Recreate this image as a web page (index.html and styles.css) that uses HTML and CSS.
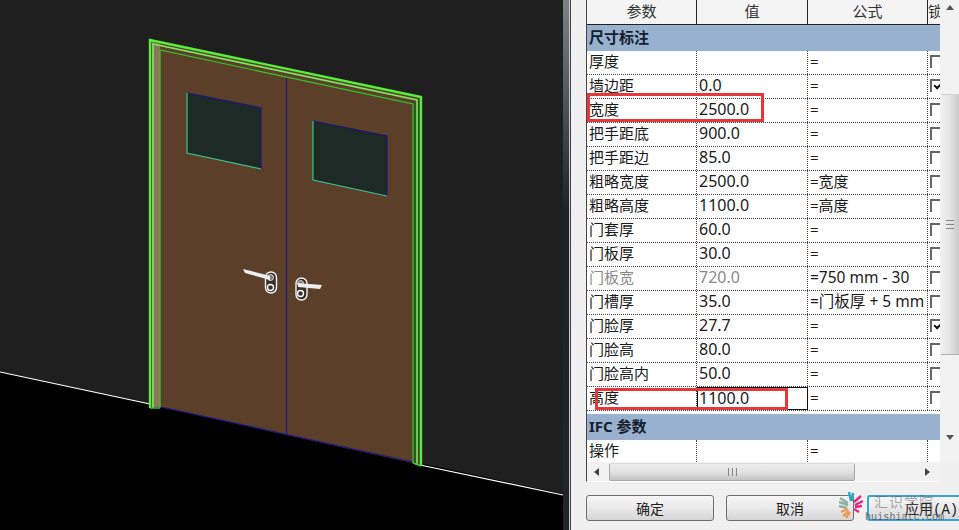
FILE: index.html
```html
<!DOCTYPE html>
<html lang="en">
<head>
    <meta charset="UTF-8">
    <meta name="viewport" content="width=device-width, initial-scale=1.0">
    <title>族类型参数</title>
    <link rel="stylesheet" href="styles.css">
</head>
<body>
    <div class="viewport">
        <svg class="scene" width="563" height="530" viewBox="0 0 563 530">
            <rect width="563" height="530" fill="#1f1f1f"/>
            <polygon points="0,372 563,494 563,530 0,530" fill="#000"/>
            <polyline points="0,372 150,404" fill="none" stroke="#fff" stroke-width="1.2"/>
            <polyline points="420,465 563,495" fill="none" stroke="#fff" stroke-width="1.2"/>

            <!-- door leafs -->
            <polygon points="150,40 421,97 421,466 413,463 161,407 150,408" fill="#5b3f28"/>
            <polygon points="152,42 160,44 160,407 152,407" fill="#8d7458"/>
            <polygon points="413,103 420,100 420,464 413,461" fill="#3b4a2c"/>
            <line x1="161" y1="407" x2="413" y2="462" stroke="#1f1490" stroke-width="1.2"/>
            <line x1="286.5" y1="78" x2="286.5" y2="435" stroke="#1f1490" stroke-width="1.2"/>

            <!-- frame -->
            <polyline points="150,408 150,40 421,97 421,466" fill="none" stroke="#55f03a" stroke-width="2.4"/>
            <polyline points="153,408 153,44 417,100 417,464" fill="none" stroke="#7ae862" stroke-width="1.6"/>
            <polyline points="160,408 160,50 413,104 413,463" fill="none" stroke="#34c92a" stroke-width="1.2"/>
            <line x1="150" y1="408" x2="160" y2="408" stroke="#43c934" stroke-width="1.4"/>
            <line x1="413" y1="463" x2="421" y2="466" stroke="#43c934" stroke-width="1.4"/>

            <!-- windows -->
            <polygon points="187,93 261,108 261,169 187,153" fill="#1d2a26"/>
            <polyline points="187,93 261,108 261,169" fill="none" stroke="#1c1480" stroke-width="1.2"/>
            <polyline points="187,93 187,153 261,169" fill="none" stroke="#3fc08a" stroke-width="1.2"/>
            <polygon points="313,121 387,136 387,196 313,180" fill="#1d2a26"/>
            <polyline points="313,121 387,136 387,196" fill="none" stroke="#1c1480" stroke-width="1.2"/>
            <polyline points="313,121 313,180 387,196" fill="none" stroke="#3fc08a" stroke-width="1.2"/>

            <!-- handles -->
            <rect x="265.5" y="272" width="11" height="21" rx="5.5" fill="#3a2e26" stroke="#f4f4f4" stroke-width="1.4"/>
            <circle cx="270.5" cy="277.5" r="3" fill="#777" stroke="#ddd" stroke-width="1"/>
            <circle cx="270.5" cy="287.5" r="3" fill="#333" stroke="#fff" stroke-width="1.4"/>
            <polygon points="243,269 270,276 270,280 245,273" fill="#eee"/>
            <rect x="296" y="278" width="11" height="22" rx="5.5" fill="#3a2e26" stroke="#f4f4f4" stroke-width="1.4"/>
            <circle cx="300.5" cy="283.5" r="3" fill="#777" stroke="#ddd" stroke-width="1"/>
            <circle cx="300.5" cy="293.5" r="3" fill="#333" stroke="#fff" stroke-width="1.4"/>
            <polygon points="298,283 322,285 320,289 298,287" fill="#eee"/>
        </svg>
    </div>
    <div class="divider"></div>

    <div class="panel">
        <div class="grid">
            <div class="table">
                <div class="row head">
                    <div>参数</div><div>值</div><div>公式</div><div class="lock">锁定</div>
                </div>
                <div class="section first">尺寸标注</div>
                <div class="row"><div>厚度</div><div></div><div>=</div><div><span class="check"></span></div></div>
                <div class="row"><div>墙边距</div><div class="num">0.0</div><div>=</div><div><span class="check on"></span></div></div>
                <div class="row"><div>宽度</div><div class="num">2500.0</div><div>=</div><div><span class="check"></span></div></div>
                <div class="row"><div>把手距底</div><div class="num">900.0</div><div>=</div><div><span class="check"></span></div></div>
                <div class="row"><div>把手距边</div><div class="num">85.0</div><div>=</div><div><span class="check"></span></div></div>
                <div class="row"><div>粗略宽度</div><div class="num">2500.0</div><div>=宽度</div><div><span class="check"></span></div></div>
                <div class="row"><div>粗略高度</div><div class="num">1100.0</div><div>=高度</div><div><span class="check"></span></div></div>
                <div class="row"><div>门套厚</div><div class="num">60.0</div><div>=</div><div><span class="check"></span></div></div>
                <div class="row"><div>门板厚</div><div class="num">30.0</div><div>=</div><div><span class="check"></span></div></div>
                <div class="row"><div class="muted">门板宽</div><div class="num muted">720.0</div><div class="formula">=750 mm - 30</div><div><span class="check"></span></div></div>
                <div class="row"><div>门槽厚</div><div class="num">35.0</div><div class="formula">=门板厚 + 5 mm</div><div><span class="check"></span></div></div>
                <div class="row"><div>门脸厚</div><div class="num">27.7</div><div>=</div><div><span class="check on"></span></div></div>
                <div class="row"><div>门脸高</div><div class="num">80.0</div><div>=</div><div><span class="check"></span></div></div>
                <div class="row"><div>门脸高内</div><div class="num">50.0</div><div>=</div><div><span class="check"></span></div></div>
                <div class="row"><div>高度</div><div class="num editing">1100.0</div><div>=</div><div><span class="check"></span></div></div>
                <div class="section">IFC 参数</div>
                <div class="row last"><div>操作</div><div></div><div>=</div><div></div></div>
            </div>
            <div class="vscroll">
                <span class="arrow up"></span>
                <div class="vthumb">
                    <span class="vgrip"></span>
                </div>
                <span class="arrow down"></span>
            </div>
        </div>

        <div class="hscroll">
            <span class="arrow left"></span>
            <div class="hthumb"><span class="hgrip"></span></div>
            <span class="arrow right"></span>
        </div>

        <div class="buttons">
            <button>确定</button>
            <button>取消</button>
            <button class="apply">应用(A)</button>
        </div>

        <div class="mark mark-width"></div>
        <div class="mark mark-height"></div>

        <div class="watermark">
            <svg class="wm-logo" width="26" height="28" viewBox="0 0 26 28">
                <g fill="none" stroke-width="2.4">
                    <path d="M1 7 L9 12 M0 11 L9 14 M0 15 L8 17" stroke="#8fb0a0"/>
                    <path d="M2 21 L9 18 M4 25 L10 20 M7 27 L11 21" stroke="#f09a50"/>
                    <path d="M10 1 L12 10 M14 2 L13 10" stroke="#25a8c0"/>
                    <path d="M22 5 L15 11 M24 10 L16 14 M23 15 L16 16" stroke="#e6287f"/>
                    <path d="M20 21 L15 18" stroke="#e6287f"/>
                </g>
            </svg>
            <div class="wm-text">
                <span class="wm-name">汇识学院</span>
                <span class="wm-url">huishiatc.com</span>
            </div>
        </div>
    </div>
</body>
</html>
```

FILE: styles.css
```css
html, body {
    margin: 0;
    padding: 0;
    width: 959px;
    height: 530px;
    overflow: hidden;
}
body {
    display: flex;
    background-color: #f0f0f0;
    font-family: "Noto Sans", "Noto Sans CJK SC", sans-serif;
    font-size: 15px;
    color: #1a1a1a;
}
.viewport {
    width: 563px;
    height: 530px;
    flex: none;
}
.scene {
    display: block;
}
.divider {
    width: 8px;
    flex: none;
    background: linear-gradient(to bottom, #7d8284 0, #60666a 12%, #1c2226 40%, #20262a 100%);
    box-sizing: border-box;
    border-right: 1px solid #444;
    box-shadow: inset -1px 0 0 #c4c8ca;
}
.panel {
    position: relative;
    width: 388px;
    flex: none;
    padding-left: 15px;
    box-sizing: border-box;
    overflow: hidden;
}
.grid {
    display: flex;
    height: 462px;
}
.table {
    width: 354px;
    flex: none;
    border-left: 1px solid #444;
    background: #fff;
    box-sizing: border-box;
    overflow: hidden;
}
.row {
    display: grid;
    grid-template-columns: 110px 111px 120px 12px;
    height: 24px;
    box-sizing: border-box;
    border-bottom: 1px dotted #444;
    line-height: 21px;
}
.row > div {
    box-sizing: border-box;
    padding-left: 2px;
    border-right: 1px dotted #444;
    white-space: nowrap;
    overflow: hidden;
}
.row > div:last-child {
    border-right: 0;
}
.row > .num {
    font-size: 16px;
}
.row > .formula {
    font-size: 15.5px;
}
.row > .muted {
    color: #8a8a8a;
}
.head {
    height: 25px;
    background: #f4f4f4;
    border-bottom: 1px solid #222;
    color: #333;
    line-height: 23px;
}
.head > div {
    text-align: center;
    border-right: 1px solid #222;
    padding-left: 0;
}
.head > .lock {
    text-align: left;
}
.last {
    height: 22px;
    border-bottom: 0;
}
.section {
    height: 26px;
    margin-top: 3px;
    padding-left: 2px;
    background: #97b1cf;
    font-weight: bold;
    line-height: 25px;
    color: #14202c;
}
.section.first {
    margin-top: 0;
}
.row > .editing {
    border: 1px solid #111;
    line-height: 20px;
    padding-left: 1px;
}
.check {
    display: block;
    box-sizing: border-box;
    width: 13px;
    height: 13px;
    margin: 4px 0 0 0;
    border-top: 2px solid #666;
    border-left: 2px solid #666;
    background: #fff;
}
.check.on {
    position: relative;
}
.check.on::after {
    content: "";
    position: absolute;
    left: 2px;
    top: 1px;
    width: 7px;
    height: 3px;
    border-left: 2px solid #111;
    border-bottom: 2px solid #111;
    transform: rotate(-45deg);
}
.vscroll {
    width: 19px;
    flex: none;
    display: flex;
    flex-direction: column;
    align-items: center;
    background: #f2f2f2;
}
.vthumb {
    width: 18px;
    height: 261px;
    margin: 84px 0 80px 1px;
    display: flex;
    align-items: center;
    justify-content: center;
    background: linear-gradient(to right, #f0f0f0, #e4e4e4 50%, #c9c9c9);
    border-top: 1px solid #d0d0d0;
    border-bottom: 1px solid #b0b0b0;
    box-sizing: border-box;
}
.vgrip {
    width: 8px;
    height: 7px;
    border-top: 1px solid #888;
    border-bottom: 1px solid #888;
    background: linear-gradient(#888, #888) center / 100% 1px no-repeat;
}
.arrow {
    width: 0;
    height: 0;
    flex: none;
    border-style: solid;
    border-color: transparent;
}
.arrow.up {
    margin-top: 5px;
    border-width: 0 4px 5px;
    border-bottom-color: #555;
}
.arrow.down {
    border-width: 5px 4px 0;
    border-top-color: #555;
}
.arrow.left {
    margin-left: 7px;
    border-width: 4px 5px 4px 0;
    border-right-color: #444;
}
.arrow.right {
    margin-left: 70px;
    border-width: 4px 0 4px 5px;
    border-left-color: #444;
}
.hscroll {
    display: flex;
    align-items: center;
    width: 354px;
    height: 20px;
    box-sizing: border-box;
    border-left: 1px solid #444;
    border-bottom: 1px solid #fff;
    background: #f2f2f2;
}
.hthumb {
    width: 246px;
    height: 18px;
    margin-left: 10px;
    box-sizing: border-box;
    display: flex;
    align-items: center;
    justify-content: center;
    background: linear-gradient(to bottom, #ececec, #e2e2e2 50%, #c4c4c4);
    border: 1px solid #a8a8a8;
    border-top-color: #ddd;
    border-radius: 2px;
}
.hgrip {
    width: 7px;
    height: 8px;
    border-left: 1px solid #888;
    border-right: 1px solid #888;
    background: linear-gradient(#888, #888) center / 1px 100% no-repeat;
}
.buttons {
    display: flex;
    gap: 12px;
    margin-top: 13px;
}
.buttons button {
    width: 128px;
    height: 26px;
    flex: none;
    padding: 0;
    box-sizing: border-box;
    font-family: "Noto Sans CJK SC", sans-serif;
    font-size: 14px;
    color: #222;
    background: linear-gradient(to bottom, #f6f6f6, #ebebeb 45%, #d6d6d6);
    border: 1px solid #707070;
    border-radius: 3px;
}
.buttons .apply {
    width: 100px;
    margin-left: 1px;
    padding-left: 36px;
    text-align: left;
    white-space: nowrap;
    border: 2px solid #3fa3cf;
    border-right: 0;
    border-radius: 3px 0 0 3px;
    font-family: "Liberation Mono", "Noto Sans CJK SC", monospace;
    font-size: 14px;
}
.mark {
    position: absolute;
    box-sizing: border-box;
    border: 3px solid #e5383b;
}
.mark-width {
    left: 16px;
    top: 93px;
    width: 177px;
    height: 29px;
}
.mark-height {
    left: 24px;
    top: 388px;
    width: 193px;
    height: 22px;
}
.watermark {
    position: absolute;
    left: 268px;
    top: 491px;
    display: flex;
    pointer-events: none;
}
.wm-text {
    display: flex;
    flex-direction: column;
}
.wm-name {
    margin-left: 9px;
    font-size: 14px;
    line-height: 22px;
    letter-spacing: 1px;
    color: rgba(90, 90, 90, 0.5);
}
.wm-url {
    font-family: "Liberation Mono", monospace;
    font-size: 10px;
    line-height: 9px;
    letter-spacing: 0.1px;
    color: rgba(70, 70, 70, 0.75);
}
```
